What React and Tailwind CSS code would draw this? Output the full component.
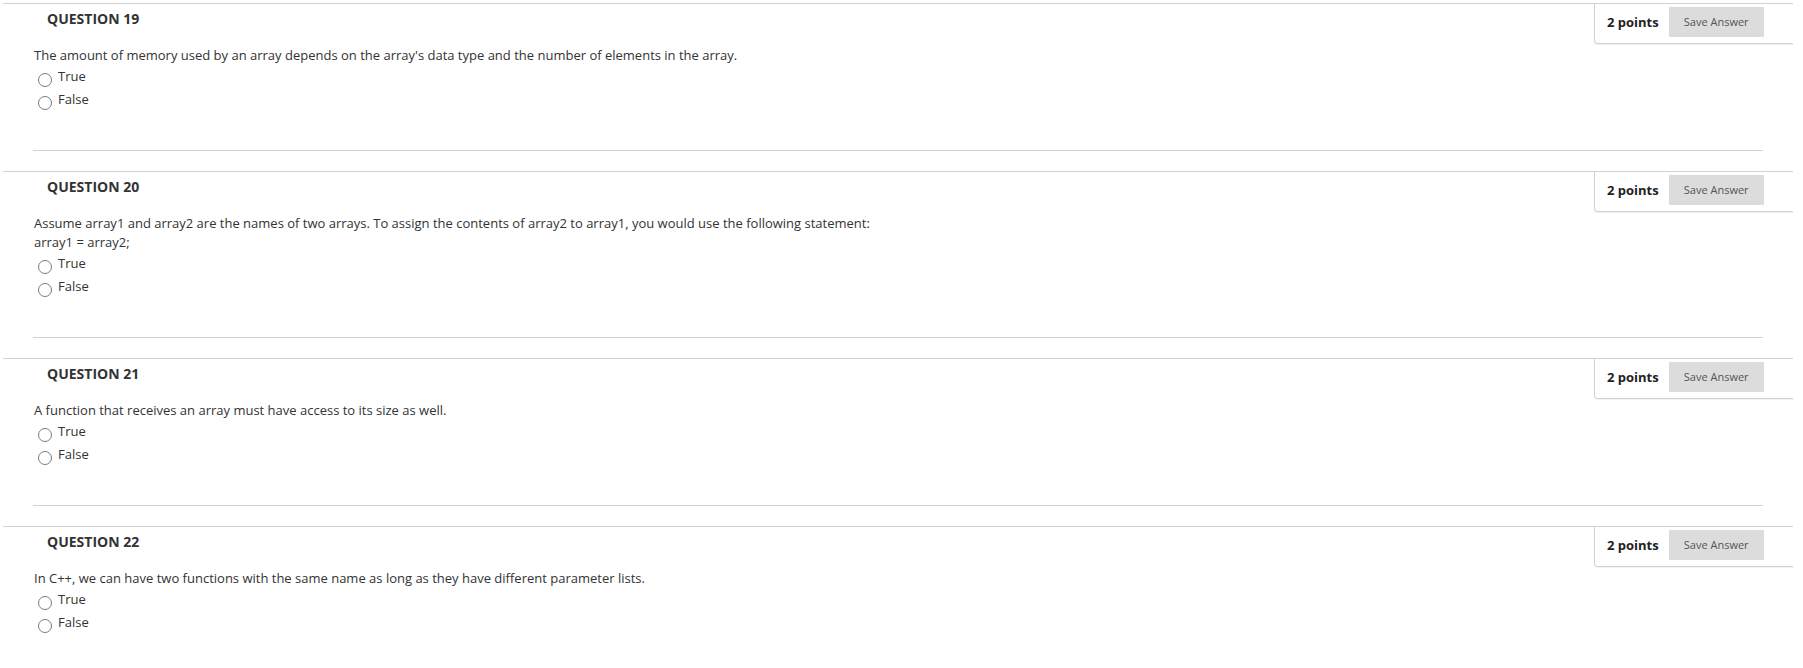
const questions = [
  {
    number: 19,
    lines: [
      "The amount of memory used by an array depends on the array's data type and the number of elements in the array.",
    ],
  },
  {
    number: 20,
    lines: [
      'Assume array1 and array2 are the names of two arrays. To assign the contents of array2 to array1, you would use the following statement:',
      'array1 = array2;',
    ],
  },
  {
    number: 21,
    lines: ['A function that receives an array must have access to its size as well.'],
  },
  {
    number: 22,
    lines: ['In C++, we can have two functions with the same name as long as they have different parameter lists.'],
  },
]

const Radio = ({ label }) => (
  <label className="flex items-start h-[23px] pl-[5px] cursor-pointer">
    <span className="mt-[6px] w-[14px] h-[14px] rounded-full border border-[#7a7a7a] bg-white shrink-0"></span>
    <span className="ml-[6px] text-[13px] leading-[19px] text-[#333]">{label}</span>
  </label>
)

const Question = ({ q }) => (
  <div className="border-t border-[#d2d2d2] mb-[20px]">
    {/* header */}
    <div className="flex justify-between items-start">
      <h3 className="pl-[44px] pt-[5px] text-[14px] leading-[20px] font-bold text-[#333]">QUESTION {q.number}</h3>
      <div className="flex items-center w-[199px] pl-[12px] pt-[3px] pb-[6px] border-l border-b border-[#d2d2d2] rounded-bl-[4px] shadow-[0_1px_1px_rgba(0,0,0,0.06)]">
        <span className="text-[13px] font-bold text-[#222] leading-[20px]">2 points</span>
        <button className="ml-[10px] w-[95px] h-[30px] bg-[#dcdcdc] text-[11px] text-[#555] leading-[30px] text-center">
          Save Answer
        </button>
      </div>
    </div>

    {/* body */}
    <div className="mx-[30px] pb-[37px] border-b border-[#d2d2d2]">
      <div className="mt-[2px] pl-[1px] text-[13px] leading-[19px] text-[#333]">
        {q.lines.map((line, i) => (
          <p key={i}>{line}</p>
        ))}
      </div>
      <div className="mt-[2px]">
        <Radio label="True" />
        <Radio label="False" />
      </div>
    </div>
  </div>
)

export default function App() {
  return (
    <div className="w-[1803px] h-[668px] overflow-hidden bg-white font-['Open_Sans',sans-serif]">
      <div className="mt-[3px] ml-[3px] mr-[10px]">
        {questions.map((q) => (
          <Question key={q.number} q={q} />
        ))}
      </div>
    </div>
  )
}
